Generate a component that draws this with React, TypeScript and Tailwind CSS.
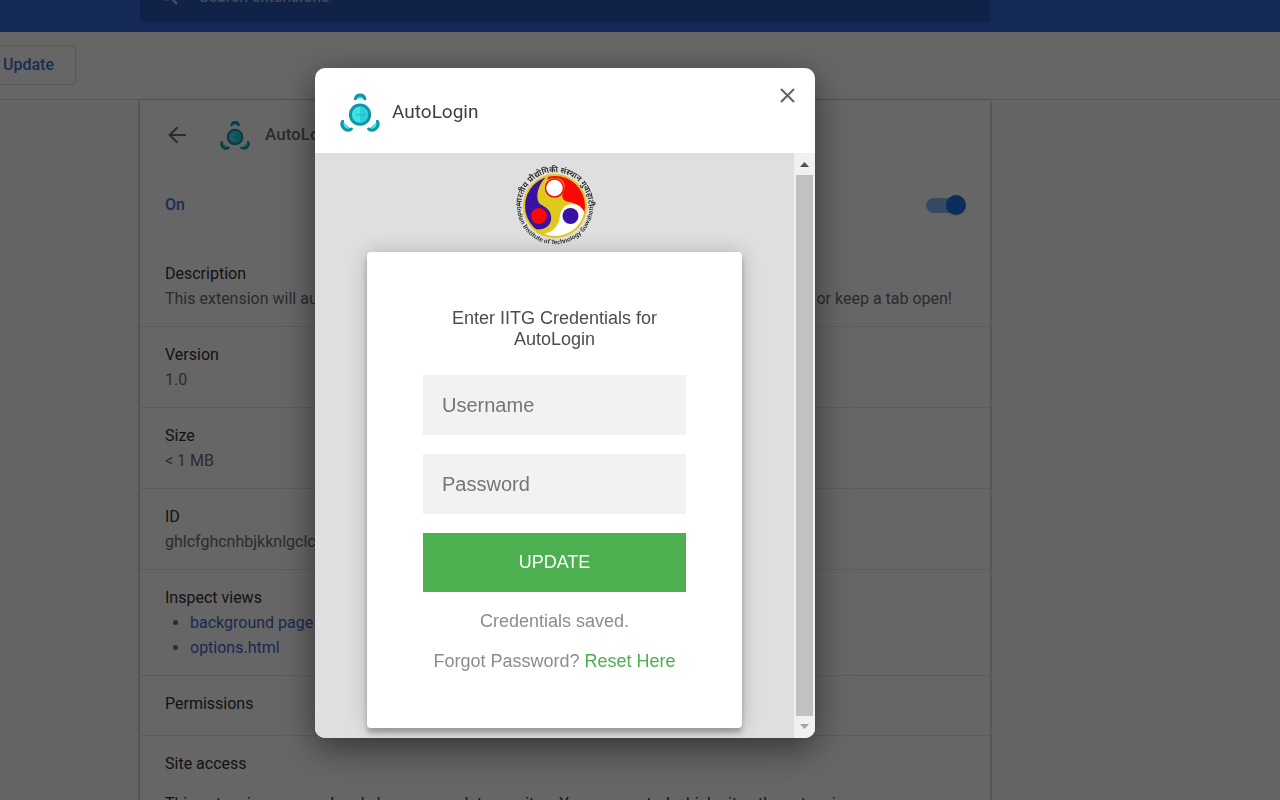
import { ReactNode } from "react";

const credentials = [
  { id: "username", label: "Username", type: "text" },
  { id: "password", label: "Password", type: "password" },
];

const details = [
  {
    title: "Description",
    text: "This extension will automatically log you in,",
    textEnd: "or keep a tab open!",
  },
  { title: "Version", text: "1.0" },
  { title: "Size", text: "< 1 MB" },
  { title: "ID", text: "ghlcfghcnhbjkknlgclc" },
];

function Logo({ className }: { className: string }) {
  return (
    <svg viewBox="0 0 40 40" className={className} aria-hidden="true">
      <g fill="#3fe3ea" stroke="#0f95a3" strokeWidth="3" strokeLinecap="round">
        <path d="M15.4 6.8A4.8 4.8 0 0 1 24.8 6.8" />
        <path d="M2.6 29.4A6 6 0 0 0 11.4 37" />
        <path d="M37.4 29.4A6 6 0 0 1 28.6 37" />
        <circle cx="20" cy="22.7" r="9.6" />
      </g>
      <path d="M20 14.6a8.1 8.1 0 0 1 0 16.2Z" fill="#2bd0da" />
      <g fill="#0f95a3">
        <circle cx="17" cy="22.7" r=".7" />
        <circle cx="20" cy="22.7" r=".7" />
        <circle cx="23" cy="22.7" r=".7" />
      </g>
    </svg>
  );
}

function Emblem() {
  return (
    <svg
      viewBox="0 0 80 80"
      className="size-20 overflow-visible"
      role="img"
      aria-label="Indian Institute of Technology Guwahati"
    >
      <defs>
        <path id="arc-top" d="M7.1 46A33.5 33.5 0 1 1 72.9 46" />
        <path id="arc-bottom" d="M3.4 30A38 38 0 1 0 76.6 30" />
        <clipPath id="disc">
          <circle cx="40" cy="40" r="30" />
        </clipPath>
      </defs>
      <circle cx="40" cy="40" r="32" fill="#e0c81e" />
      <g clipPath="url(#disc)">
        <path d="M31 11C4 20 4 50 14 61C24 67 38 62 36 50C35 43 30 41 25 38C20 33 22 20 31 11Z" fill="#3a12a3" />
        <path d="M34 9C54 4 78 24 70 48C67 40 61 37 54 36C48 35 46 31 48 27C54 14 42 9 32 14Z" fill="#f80808" />
        <path d="M70 48C69 66 46 76 29 68C38 66 44 60 45 50C46 42 51 38 57 38C64 38 68 42 70 48Z" fill="#fff" />
      </g>
      <circle cx="39.5" cy="22" r="9" fill="#fff" stroke="#f80808" strokeWidth="1.5" />
      <circle cx="24" cy="50" r="8.6" fill="#f80808" stroke="#3a12a3" strokeWidth="1.2" />
      <circle cx="55.5" cy="50" r="8" fill="#3a12a3" />
      <g fill="#222" className="font-['Noto_Sans',sans-serif] font-semibold">
        <text fontSize="8" textAnchor="middle">
          <textPath href="#arc-top" startOffset="50%">भारतीय प्रौद्योगिकी संस्थान गुवाहाटी</textPath>
        </text>
        <text fontSize="6" textAnchor="middle">
          <textPath href="#arc-bottom" startOffset="50%">•Indian Institute of Technology Guwahati•</textPath>
        </text>
      </g>
    </svg>
  );
}

function Section({ title, children }: { title: string; children?: ReactNode }) {
  return (
    <section className="min-h-[60px] border-b border-[#e8e8e8] px-[25px] py-[15px] leading-[25px]">
      <h2 className="text-[#303134]">{title}</h2>
      {children}
    </section>
  );
}

function ExtensionPage() {
  return (
    <div className="h-screen overflow-hidden bg-[#fafafa] text-base text-[#6c6e72]">
      <header className="flex h-8 items-end bg-[#3367d6] pl-[140px]">
        <label className="mb-[10px] flex h-[50px] w-full max-w-[850px] shrink-0 items-center gap-[17px] bg-[#2a56b2] pl-[18px] text-[#b4c4e8]">
          <svg viewBox="0 0 24 24" className="size-6 shrink-0" fill="none" stroke="currentColor" strokeWidth="2.2">
            <circle cx="9" cy="9" r="5.5" />
            <path d="m13 13 6 6" />
          </svg>
          <input
            type="search"
            aria-label="Search extensions"
            placeholder="Search extensions"
            className="w-full bg-transparent outline-none placeholder:text-[#b4c4e8]"
          />
        </label>
      </header>
      <div className="flex h-[68px] items-center border-b border-[#dadce0] bg-white pb-[2px]">
        <button className="-ml-4 h-10 rounded border border-[#dadce0] pr-[21px] pl-[18px] font-medium text-[#3f70d8]">
          Update
        </button>
      </div>
      <main className="ml-[140px] max-w-[850px] bg-white shadow-[0_1px_3px_rgba(0,0,0,0.5)]">
        <div className="flex h-[70px] items-center pl-[25px]">
          <button aria-label="Back" className="mr-[30px]">
            <svg viewBox="0 0 24 24" className="size-[25px]" fill="none" stroke="currentColor" strokeWidth="2">
              <path d="M20 11.5H5M12 4 4.5 11.5l7.5 7.5" />
            </svg>
          </button>
          <Logo className="size-[30px]" />
          <h1 className="ml-[15px] text-[17px] font-medium">AutoLogin</h1>
        </div>
        <div className="flex h-[70px] items-center justify-between pr-6 pl-[25px]">
          <label htmlFor="enabled" className="font-medium text-[#4a72d4]">
            On
          </label>
          <span className="relative flex h-5 w-10 items-center">
            <input
              id="enabled"
              type="checkbox"
              defaultChecked
              className="h-[15px] w-9 appearance-none rounded-full bg-[#8db9f4]"
            />
            <span className="pointer-events-none absolute right-0 size-5 rounded-full bg-[#1a73e8] shadow" />
          </span>
        </div>
        <div className="pt-[6px]">
          {details.map((item) => (
            <Section key={item.title} title={item.title}>
              <p className="flex justify-between pr-[13px] whitespace-nowrap">
                <span>{item.text}</span>
                {item.textEnd && <span>{item.textEnd}</span>}
              </p>
            </Section>
          ))}
          <Section title="Inspect views">
            <ul className="list-disc pl-[25px]">
              <li>
                <a href="#background" className="text-[#4366cc]">background page</a>
              </li>
              <li>
                <a href="#options" className="text-[#4366cc]">options.html</a>
              </li>
            </ul>
          </Section>
          <Section title="Permissions" />
          <Section title="Site access">
            <p className="mt-[15px] text-[#303134]">
              This extension can read and change your data on sites. You can control which sites the extension can
              access.
            </p>
          </Section>
        </div>
      </main>
    </div>
  );
}

function OptionsDialog() {
  return (
    <div className="fixed inset-0 flex items-start justify-center bg-black/60 pt-[68px] pr-[150px]">
      <div
        role="dialog"
        aria-label="AutoLogin"
        className="w-full max-w-[500px] overflow-hidden rounded-[10px] bg-white shadow-[0_10px_35px_rgba(0,0,0,0.5)]"
      >
        <div className="flex h-[85px] items-start justify-between pt-[15px] pr-[15px] pl-[25px]">
          <div className="flex items-center gap-3 pt-[9px]">
            <Logo className="size-10" />
            <h2 className="text-[19px] text-[#3c4043]">AutoLogin</h2>
          </div>
          <button aria-label="Close" className="text-[#5f6368]">
            <svg viewBox="0 0 24 24" className="size-6" fill="none" stroke="currentColor" strokeWidth="2">
              <path d="m5 6 13 13M18 6 5 19" />
            </svg>
          </button>
        </div>
        <div className="flex h-[585px] bg-[#dfdfdf] font-['Liberation_Sans',sans-serif]">
          <div className="flex flex-1 flex-col items-center overflow-hidden px-[52px] pt-[13px]">
            <Emblem />
            <form className="mt-[6px] flex w-full flex-col rounded bg-white px-14 py-14 text-center text-lg leading-[21px] text-[#4d4d4d] shadow-[0_0_20px_rgba(0,0,0,0.2),0_5px_5px_rgba(0,0,0,0.24)]">
              <p className="px-5">Enter IITG Credentials for AutoLogin</p>
              <div className="mt-[25px] flex flex-col gap-[19px]">
                {credentials.map((field) => (
                  <input
                    key={field.id}
                    id={field.id}
                    type={field.type}
                    aria-label={field.label}
                    placeholder={field.label}
                    className="h-[60px] w-full bg-[#f2f2f2] px-[19px] text-xl outline-none placeholder:text-[#757575]"
                  />
                ))}
                <button type="button" className="h-[59px] bg-[#4caf50] text-white">
                  UPDATE
                </button>
              </div>
              <p className="mt-[19px] text-[#8c8c8c]">Credentials saved.</p>
              <p className="mt-[19px] whitespace-nowrap text-[#8c8c8c]">
                Forgot Password?{" "}
                <a href="#reset" className="text-[#4caf50]">Reset Here</a>
              </p>
            </form>
          </div>
          <div className="flex w-[21px] flex-col items-center bg-[#f1f1f1]" aria-hidden="true">
            <svg viewBox="0 0 21 22" className="h-[22px] w-[21px]">
              <path d="m6 14 4.5-5 4.5 5Z" fill="#505050" />
            </svg>
            <div className="w-[17px] flex-1 bg-[#c1c1c1]" />
            <svg viewBox="0 0 21 22" className="h-[22px] w-[21px]">
              <path d="m6 8 4.5 5L15 8Z" fill="#a3a3a3" />
            </svg>
          </div>
        </div>
      </div>
    </div>
  );
}

export default function App() {
  return (
    <div className="font-[Roboto,sans-serif]">
      <ExtensionPage />
      <OptionsDialog />
    </div>
  );
}
